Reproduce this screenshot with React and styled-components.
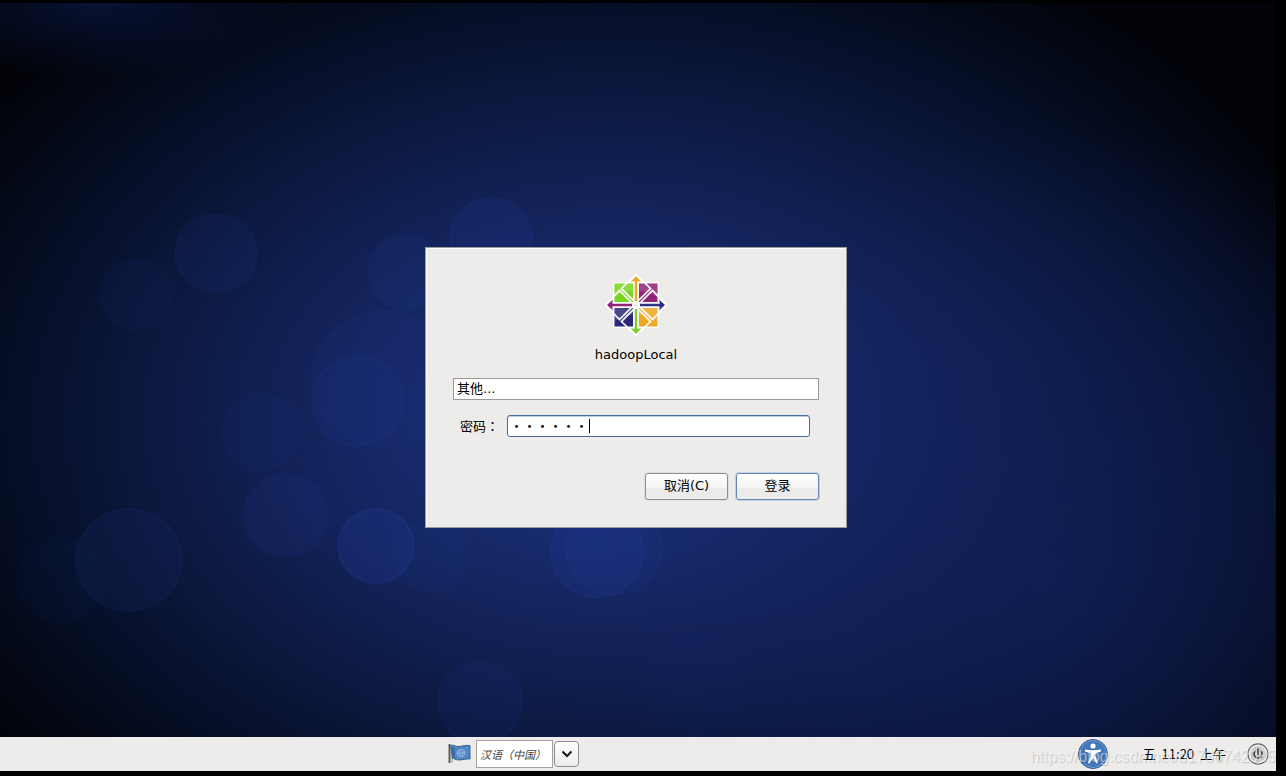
import React, { useState } from "react";
import styled, { createGlobalStyle } from "styled-components";

const GlobalStyle = createGlobalStyle`
    * {
        box-sizing: border-box;
    }

    body {
        margin: 0;
        background: #000;
        color: #000;
        font: 13px/18px "DejaVu Sans", "Noto Sans CJK SC", sans-serif;
    }

    button,
    input,
    select {
        color: inherit;
        font: inherit;
    }
`;

const Screen = styled.div`
    display: flex;
    flex-direction: column;
    min-height: 100vh;
    padding: 3px 10px 5px 0;
`;

const Desktop = styled.main`
    position: relative;
    flex: 1;
    display: flex;
    align-items: center;
    justify-content: center;
    padding: 34px 4px 0 0;
    overflow: hidden;
`;

const WallpaperArt = styled.svg`
    position: absolute;
    inset: 0;
    width: 100%;
    height: 100%;
`;

const Dialog = styled.form`
    position: relative;
    display: flex;
    flex-direction: column;
    width: 422px;
    padding: 25px 27px 27px;
    background: #edeceb;
    border: 1px solid #9b9c9b;
    box-shadow: inset 1px 1px 0 #fff;
`;

const Brand = styled.div`
    display: flex;
    flex-direction: column;
    align-items: center;
    gap: 9px;

    svg {
        width: 64px;
        height: 64px;
    }

    h1 {
        margin: 0;
        font-size: 13px;
        font-weight: normal;
    }
`;

const UserSelect = styled.select`
    appearance: none;
    width: 100%;
    height: 22px;
    margin-top: 14px;
    padding: 0 3px;
    background: #fff;
    border: 1px solid #9c9a98;
    border-radius: 0;
`;

const PasswordRow = styled.div`
    display: flex;
    align-items: center;
    gap: 8px;
    margin-top: 15px;
    padding: 0 9px 0 7px;

    label {
        font-family: "Noto Sans CJK TC", sans-serif;
    }
`;

const PasswordField = styled.div`
    position: relative;
    flex: 1;

    input {
        display: block;
        width: 100%;
        height: 22px;
        padding: 0 2px;
        background: #fff;
        border: 1px solid #4a6d9f;
        border-radius: 3px;
        box-shadow: inset 0 1px 0 #bdd0ea;
        caret-color: transparent;
        font-family: "Noto Sans CJK SC", sans-serif;
        outline: none;
    }
`;

const Caret = styled.span`
    position: absolute;
    top: 4px;
    width: 1px;
    height: 14px;
    background: #000;
`;

const Actions = styled.div`
    display: flex;
    justify-content: flex-end;
    gap: 8px;
    margin-top: 36px;
`;

const Button = styled.button`
    width: 83px;
    height: 27px;
    padding: 0;
    background: linear-gradient(#fff, #f5f5f4 50%, #ecebea 60%, #ececeb);
    border: 1px solid ${(props) => (props.$primary ? "#6686b2" : "#8f8d8b")};
    border-radius: 3px;
    box-shadow: 0 0 0 1px ${(props) => (props.$primary ? "#c0d2ea" : "#e2e1e0")};
`;

const Panel = styled.footer`
    position: relative;
    display: grid;
    grid-template-columns: 1fr auto 1fr;
    align-items: center;
    height: 34px;
    background: #edeceb;
`;

const Language = styled.div`
    grid-column: 2;
    display: flex;
    align-items: center;
    padding-right: 250px;

    svg.flag {
        width: 24px;
        height: 24px;
        margin-right: 5px;
    }

    input {
        width: 77px;
        height: 28px;
        padding: 0 3px;
        background: #fff;
        border: 1px solid #a5a3a1;
        color: #444;
        font-size: 11px;
        font-style: italic;
        outline: none;
    }

    button {
        display: flex;
        align-items: center;
        justify-content: center;
        width: 25px;
        height: 26px;
        margin-left: 1px;
        padding: 0;
        background: linear-gradient(#fff, #eeedec);
        border: 1px solid #8f8d8b;
        border-radius: 4px;
    }
`;

const Tray = styled.div`
    grid-column: 3;
    display: flex;
    align-items: center;
    justify-content: flex-end;
    padding-right: 6px;

    time {
        margin: 0 20px 0 34px;
        font: 13px/18px "Noto Sans CJK SC", sans-serif;
        word-spacing: 3px;
    }
`;

const IconButton = styled.button`
    display: flex;
    padding: 0;
    background: none;
    border: 0;

    svg {
        width: ${(props) => props.$size}px;
        height: ${(props) => props.$size}px;
    }
`;

const Watermark = styled.span`
    position: absolute;
    right: 0;
    bottom: 4px;
    color: rgba(255, 255, 255, 0.5);
    font: 16px/20px "Liberation Sans", sans-serif;
    text-shadow: 1px 1px 1px rgba(0, 0, 0, 0.16);
    pointer-events: none;
`;

// cx, cy, rx, ry, opacity
const bubbles = [
    [216, 250, 41, 39, 0.1],
    [136, 292, 36, 35, 0.06],
    [491, 236, 41, 41, 0.13],
    [406, 269, 38, 38, 0.1],
    [385, 376, 73, 68, 0.08],
    [358, 398, 46, 45, 0.11],
    [262, 429, 39, 38, 0.07],
    [286, 512, 42, 41, 0.1],
    [376, 543, 38, 37, 0.22],
    [129, 557, 53, 51, 0.1],
    [60, 577, 44, 43, 0.04],
    [432, 553, 37, 36, 0.07],
    [597, 548, 46, 46, 0.16],
    [614, 545, 48, 46, 0.11],
    [480, 700, 42, 41, 0.09],
    [696, 681, 50, 50, 0.03],
    [350, 492, 58, 63, 0.03],
];

const Wallpaper = () => {
    return (
        <WallpaperArt viewBox="0 0 1276 734" preserveAspectRatio="none" aria-hidden="true">
            <defs>
                <radialGradient id="base" gradientUnits="userSpaceOnUse" cx="0" cy="0" r="1" gradientTransform="translate(610 415) scale(760 530)">
                    <stop offset="0" stopColor="#1a317c" />
                    <stop offset="0.25" stopColor="#172a6b" />
                    <stop offset="0.5" stopColor="#101e4e" />
                    <stop offset="0.75" stopColor="#07112c" />
                    <stop offset="1" stopColor="#020309" />
                </radialGradient>
                <radialGradient id="right" gradientUnits="userSpaceOnUse" cx="0" cy="0" r="1" gradientTransform="translate(1060 580) scale(460 460)">
                    <stop offset="0" stopColor="#122260" stopOpacity="0.65" />
                    <stop offset="0.5" stopColor="#122260" stopOpacity="0.4" />
                    <stop offset="1" stopColor="#122260" stopOpacity="0" />
                </radialGradient>
                <radialGradient id="corner" gradientUnits="userSpaceOnUse" cx="0" cy="0" r="1" gradientTransform="translate(100 0) scale(190 75)">
                    <stop offset="0" stopColor="#0a1a4a" stopOpacity="0.65" />
                    <stop offset="1" stopColor="#0a1a4a" stopOpacity="0" />
                </radialGradient>
            </defs>
            <rect width="1276" height="734" fill="url(#base)" />
            <rect width="1276" height="734" fill="url(#right)" />
            <rect width="1276" height="734" fill="url(#corner)" />
            {bubbles.map(([cx, cy, rx, ry, opacity]) => (
                <ellipse
                    key={`${cx}-${cy}`}
                    cx={cx}
                    cy={cy}
                    rx={rx}
                    ry={ry}
                    fill="#2340a8"
                    fillOpacity={opacity}
                    stroke="#3158c0"
                    strokeOpacity={opacity * 0.7}
                    strokeWidth="2"
                />
            ))}
        </WallpaperArt>
    );
};

const arrows = [
    [0, "#efa724"],
    [90, "#332f83"],
    [180, "#79d420"],
    [270, "#932279"],
];

const CentosLogo = () => {
    return (
        <svg viewBox="-32 -32 64 64" role="img" aria-label="CentOS">
            <rect x="-23" y="-23" width="46" height="46" fill="#fff" />
            <path d="M-21.500-21.500H-3V-3H-21.500Z" fill="#79d420" />
            <path d="M3-21.500H21.500V-3H3Z" fill="#932279" />
            <path d="M-21.500 3H-3V21.500H-21.500Z" fill="#2c2878" />
            <path d="M3 3H21.500V21.500H3Z" fill="#efa724" />
            <path d="M-21-21H-3V-14Q-12-14-21-8ZM3-21H21V-8Q12-14 3-14ZM-21 3H-3V10Q-12 10-21 16ZM3 3H21V16Q12 10 3 10Z" fill="#fff" opacity="0.14" />
            {arrows.map(([angle]) => (
                <g key={angle} transform={`rotate(${angle})`}>
                    <path d="M0-31L8-23H-8Z" fill="#fff" />
                    <path d="M0-30.500L14.500-16.500L0-2L-14.500-16.500Z" fill="none" stroke="#fff" strokeWidth="1.700" />
                    <path d="M-2.800-24H2.800V0H-2.800Z" fill="#fff" />
                </g>
            ))}
            {arrows.map(([angle, color]) => (
                <path
                    key={angle}
                    d="M0-29L5.500-23Q3-24 1.200-23.500V-4H-1.200V-23.500Q-3-24-5.500-23Z"
                    fill={color}
                    transform={`rotate(${angle})`}
                />
            ))}
            <circle r="4" fill="#fff" />
            <circle r="2.200" fill="#edeceb" />
        </svg>
    );
};

const FlagIcon = () => {
    return (
        <svg className="flag" viewBox="0 0 24 24" aria-hidden="true">
            <path d="M2.500 2V21" stroke="#5b5f5b" strokeWidth="2" />
            <path d="M5 5V21" stroke="#b5b8b5" strokeWidth="1.500" />
            <path d="M3.500 3.500C6 2 8 5 12 4.500S19 3 23 3.500V17C19 16.500 16 18 12 18S7 16 5.500 16.500Z" fill="#5288c5" stroke="#39648f" />
            <path d="M4.500 5C6 4.500 7 5 8 5.500V16C7 15.500 6 15.500 5.500 15.500Z" fill="#3b6ba4" />
            <g fill="none" stroke="#8fb6e2">
                <ellipse cx="14" cy="11" rx="4" ry="3.500" />
                <ellipse cx="14" cy="11" rx="1.800" ry="3.500" />
                <path d="M10 11H18" />
            </g>
        </svg>
    );
};

const AccessibilityIcon = () => {
    return (
        <svg viewBox="0 0 32 32" aria-hidden="true">
            <circle cx="16" cy="16" r="14.500" fill="#4377b9" stroke="#315b96" />
            <circle cx="16" cy="16" r="13.500" fill="none" stroke="#6d9ad2" />
            <circle cx="16" cy="8" r="2.600" fill="#fff" />
            <path d="M8 11.500Q16 13 24 11.500V13.500L18.500 15.200V18L21 25L19.500 25.500L16 20L12.500 25.500L11 25L13.500 18V15.200L8 13.500Z" fill="#fff" />
        </svg>
    );
};

const PowerIcon = () => {
    return (
        <svg viewBox="0 0 24 24" aria-hidden="true">
            <circle cx="12" cy="12" r="10" fill="#cdcdcb" stroke="#666866" strokeWidth="1.300" />
            <circle cx="12" cy="12" r="8.800" fill="none" stroke="#f6f6f5" strokeWidth="1.200" />
            <path d="M12 7V12.500M9.300 9A4 4 0 1 0 14.700 9" fill="none" stroke="#333" strokeWidth="1.400" strokeLinecap="round" />
        </svg>
    );
};

const App = () => {
    const [password, setPassword] = useState("hadoop");

    return (
        <Screen>
            <GlobalStyle />
            <Desktop>
                <Wallpaper />
                <Dialog onSubmit={(e) => e.preventDefault()}>
                    <Brand>
                        <CentosLogo />
                        <h1>hadoopLocal</h1>
                    </Brand>
                    <UserSelect aria-label="用户">
                        <option>其他...</option>
                    </UserSelect>
                    <PasswordRow>
                        <label htmlFor="password">密码：</label>
                        <PasswordField>
                            <input
                                id="password"
                                type="password"
                                value={password}
                                onChange={(e) => setPassword(e.target.value)}
                            />
                            <Caret style={{ left: 4 + password.length * 13 }} />
                        </PasswordField>
                    </PasswordRow>
                    <Actions>
                        <Button type="button">取消(C)</Button>
                        <Button type="submit" $primary>登录</Button>
                    </Actions>
                </Dialog>
            </Desktop>
            <Panel>
                <Language>
                    <FlagIcon />
                    <input aria-label="语言" defaultValue="汉语（中国）" />
                    <button type="button" aria-label="选择语言">
                        <svg width="12" height="8" viewBox="0 0 12 8" fill="none" stroke="#111" strokeWidth="2">
                            <path d="M1.500 1.500L6 6L10.500 1.500" />
                        </svg>
                    </button>
                </Language>
                <Tray>
                    <IconButton type="button" aria-label="辅助功能" $size={32}>
                        <AccessibilityIcon />
                    </IconButton>
                    <time>五 11:20 上午</time>
                    <IconButton type="button" aria-label="关机" $size={24}>
                        <PowerIcon />
                    </IconButton>
                </Tray>
                <Watermark>https://blog.csdn.net/u1736742085</Watermark>
            </Panel>
        </Screen>
    );
};

export default App;
